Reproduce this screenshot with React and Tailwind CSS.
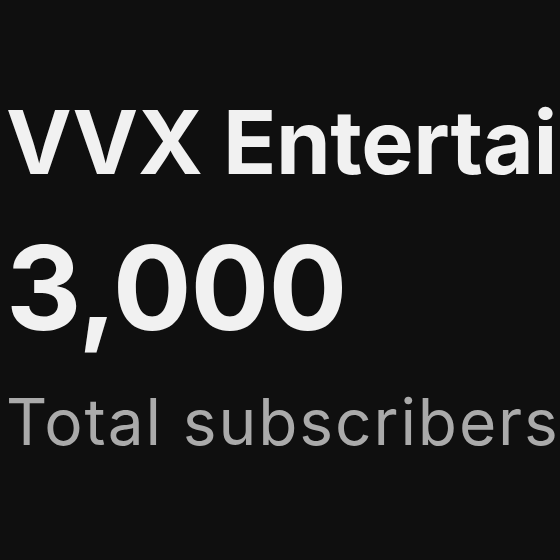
import React from "react";

const App = () => {
  return (
    <div className="w-[560px] h-[560px] bg-[#0f0f0f] overflow-hidden flex flex-col pt-[98px] pl-[6px] font-['Inter',sans-serif]">
      {/* channel name, clipped at the edge */}
      <div className="text-[88px] leading-none font-bold tracking-[-0.4px] text-[#f1f1f1] whitespace-nowrap overflow-hidden">
        VVX Entertainment
      </div>
      <div className="mt-[43px] text-[117px] leading-none font-bold tracking-[-1px] text-[#f1f1f1]">
        3,000
      </div>
      <div className="mt-[44px] text-[64px] leading-none font-normal tracking-[1.9px] text-[#aaaaaa] whitespace-nowrap">
        Total subscribers
      </div>
    </div>
  );
};

export default App;
